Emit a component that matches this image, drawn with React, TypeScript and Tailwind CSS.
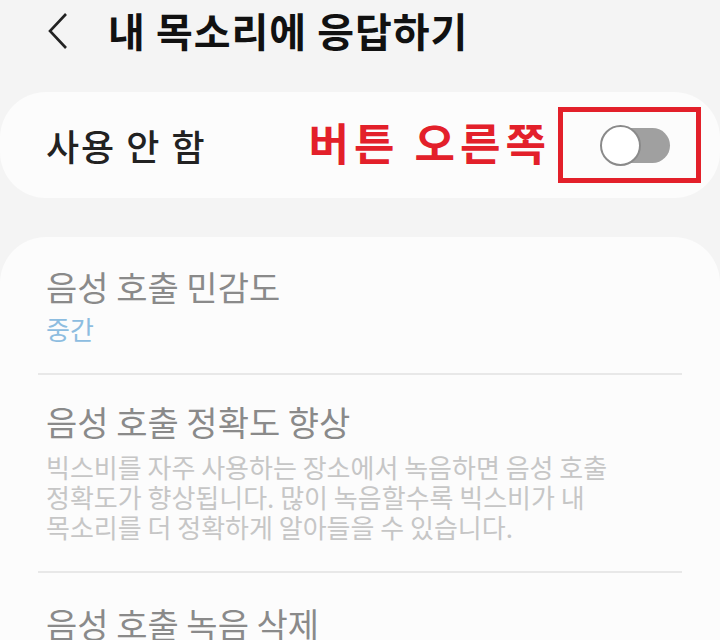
export default function App() {
  return (
    <div className="w-[720px] h-[640px] overflow-hidden bg-[#f4f4f4] font-['Noto_Sans_CJK_KR',sans-serif]">
      {/* Header */}
      <div className="flex items-center h-[60px] pl-[46px] pt-[2px]">
        <svg width="24" height="38" viewBox="0 0 24 38" className="shrink-0">
          <polyline points="20,2 4,19 20,36" fill="none" stroke="#222" strokeWidth="2.6" strokeLinejoin="miter" />
        </svg>
        <h1 className="ml-[38px] text-[40px] font-bold leading-none tracking-[1px] text-[#111] -mt-[2px]">내 목소리에 응답하기</h1>
      </div>

      {/* Toggle card */}
      <div className="mt-[32px] h-[106px] rounded-[46px] bg-[#fcfcfc] flex items-center pl-[46px] pr-[19px]">
        <span className="text-[36px] font-medium tracking-[2px] text-[#222] leading-none">사용 안 함</span>
        <span className="ml-auto text-[44px] font-bold tracking-[5px] text-[#e3202a] leading-none -mt-[6px]">버튼 오른쪽</span>
        <div className="ml-[7px] w-[143px] h-[76px] border-[5px] border-[#e3202a] flex items-center justify-center pl-[10px]">
          <div className="relative w-[70px] h-[41px] flex items-center">
            <div className="absolute left-[20px] right-0 h-[35px] rounded-r-full bg-[#a0a0a0]" />
            <div className="relative w-[41px] h-[41px] rounded-full bg-white border-[2px] border-[#8a8a8a]" />
          </div>
        </div>
      </div>

      {/* Settings card */}
      <div className="mt-[39px] rounded-t-[46px] bg-[#fcfcfc] px-[38px] pt-[30px]">
        <div className="px-[8px] pb-[24px]">
          <div className="text-[34px] text-[#8a8a8a] leading-[40px]">음성 호출 민감도</div>
          <div className="text-[26px] text-[#8dbde0] leading-[40px] mt-[2px]">중간</div>
        </div>
        <div className="h-[2px] bg-[#e8e8e8]" />
        <div className="px-[8px] pt-[27px] pb-[29px]">
          <div className="text-[34px] text-[#8a8a8a] leading-[40px]">음성 호출 정확도 향상</div>
          <div className="text-[26px] text-[#c6c6c6] leading-[30px] mt-[10px]">
            빅스비를 자주 사용하는 장소에서 녹음하면 음성 호출
            <br />
            정확도가 향상됩니다. 많이 녹음할수록 빅스비가 내
            <br />
            목소리를 더 정확하게 알아들을 수 있습니다.
          </div>
        </div>
        <div className="h-[2px] bg-[#e8e8e8]" />
        <div className="px-[8px] pt-[31px]">
          <div className="text-[34px] text-[#8a8a8a] leading-[40px]">음성 호출 녹음 삭제</div>
        </div>
      </div>
    </div>
  );
}
